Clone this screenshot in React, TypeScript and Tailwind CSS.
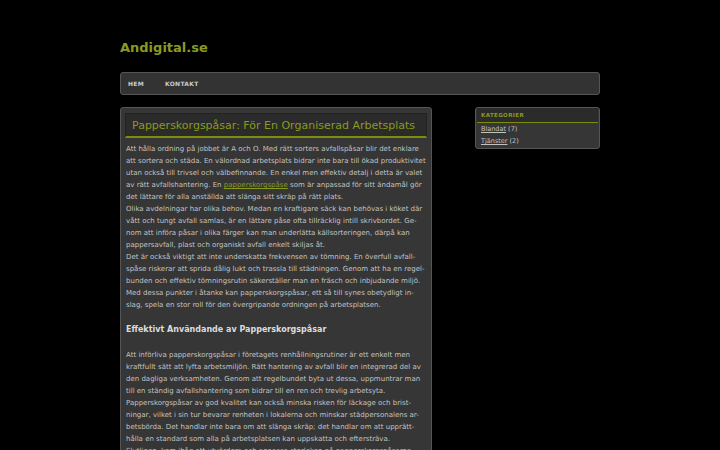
import React from 'react';

const font = { fontFamily: '"DejaVu Sans", Verdana, sans-serif' };

const introLines: React.ReactNode[] = [
  'Att hålla ordning på jobbet är A och O. Med rätt sorters avfallspåsar blir det enklare',
  'att sortera och städa. En välordnad arbetsplats bidrar inte bara till ökad produktivitet',
  'utan också till trivsel och välbefinnande. En enkel men effektiv detalj i detta är valet',
  <>
    av rätt avfallshantering. En{' '}
    <a href="#" className="text-[#8a9a1c] underline">papperskorgspåse</a> som är anpassad för sitt ändamål gör
  </>,
  'det lättare för alla anställda att slänga sitt skräp på rätt plats.',
  'Olika avdelningar har olika behov. Medan en kraftigare säck kan behövas i köket där',
  'vått och tungt avfall samlas, är en lättare påse ofta tillräcklig intill skrivbordet. Ge-',
  'nom att införa påsar i olika färger kan man underlätta källsorteringen, därpå kan',
  'pappersavfall, plast och organiskt avfall enkelt skiljas åt.',
  'Det är också viktigt att inte underskatta frekvensen av tömning. En överfull avfall-',
  'spåse riskerar att sprida dålig lukt och trassla till städningen. Genom att ha en regel-',
  'bunden och effektiv tömningsrutin säkerställer man en fräsch och inbjudande miljö.',
  'Med dessa punkter i åtanke kan papperskorgspåsar, ett så till synes obetydligt in-',
  'slag, spela en stor roll för den övergripande ordningen på arbetsplatsen.',
];

const usageLines = [
  'Att införliva papperskorgspåsar i företagets renhållningsrutiner är ett enkelt men',
  'kraftfullt sätt att lyfta arbetsmiljön. Rätt hantering av avfall blir en integrerad del av',
  'den dagliga verksamheten. Genom att regelbundet byta ut dessa, uppmuntrar man',
  'till en ständig avfallshantering som bidrar till en ren och trevlig arbetsyta.',
  'Papperskorgspåsar av god kvalitet kan också minska risken för läckage och brist-',
  'ningar, vilket i sin tur bevarar renheten i lokalerna och minskar städpersonalens ar-',
  'betsbörda. Det handlar inte bara om att slänga skräp; det handlar om att upprätt-',
  'hålla en standard som alla på arbetsplatsen kan uppskatta och eftersträva.',
  'Slutligen, kom ihåg att utvärdera och anpassa storleken på papperskorgspåsarna.',
];

const categories = [
  { name: 'Blandat', count: 7 },
  { name: 'Tjänster', count: 2 },
];

const Lines = ({ lines }: { lines: React.ReactNode[] }) => (
  <div>
    {lines.map((line, i) => (
      <div key={i} className="whitespace-nowrap h-[12px]">
        {line}
      </div>
    ))}
  </div>
);

export default function App() {
  return (
    <div className="min-h-screen bg-black overflow-hidden" style={font}>
      <div className="w-[480px] mx-auto">
        {/* Header */}
        <div className="pt-[38px] h-[72px]">
          <h1 className="text-[13px] font-bold text-[#8a9a22] leading-[20px]">Andigital.se</h1>
        </div>

        {/* Navigation */}
        <nav className="h-[23px] bg-[#333] border border-[#555] rounded-[3px] flex items-center px-[7px] gap-[21px]">
          <a href="#" className="text-[6px] font-bold text-[#ccc] tracking-[0.3px]">HEM</a>
          <a href="#" className="text-[6px] font-bold text-[#ccc] tracking-[0.3px]">KONTAKT</a>
        </nav>

        <div className="flex justify-between mt-[12px]">
          {/* Main post */}
          <main className="w-[312px] bg-[#363636] border border-[#555] rounded-[3px] px-[4px] pt-[5px] pb-4">
            <div className="bg-[#2b2b2b] border-t border-x border-[#222] border-b-2 border-b-[#7d8c0a] h-[25px] flex items-center px-[6px]">
              <h2 className="text-[11px] text-[#8a9a1c] leading-none whitespace-nowrap">
                Papperskorgspåsar: För En Organiserad Arbetsplats
              </h2>
            </div>
            <div className="text-[7px] leading-[12px] text-[#c2c2c2] mt-[5px] px-[1px]">
              <Lines lines={introLines} />
              <h3 className="text-[8px] font-bold text-[#dcdcdc] leading-[12px] mt-[13px] mb-[13px]">
                Effektivt Användande av Papperskorgspåsar
              </h3>
              <Lines lines={usageLines} />
            </div>
          </main>

          {/* Sidebar */}
          <aside className="w-[125px] self-start bg-[#363636] border border-[#555] rounded-[3px] px-[1px] pb-[1px]">
            <div className="bg-[#2b2b2b] h-[15px] flex items-center px-[4px] border-b border-[#7d8c0a]">
              <span className="text-[5.5px] font-bold text-[#8a9a1c] tracking-[0.4px]">KATEGORIER</span>
            </div>
            <ul className="text-[6.5px] text-[#c2c2c2] px-[4px]">
              {categories.map((c) => (
                <li key={c.name} className="leading-[12px]">
                  <a href="#" className="underline">{c.name}</a> ({c.count})
                </li>
              ))}
            </ul>
          </aside>
        </div>
      </div>
    </div>
  );
}
